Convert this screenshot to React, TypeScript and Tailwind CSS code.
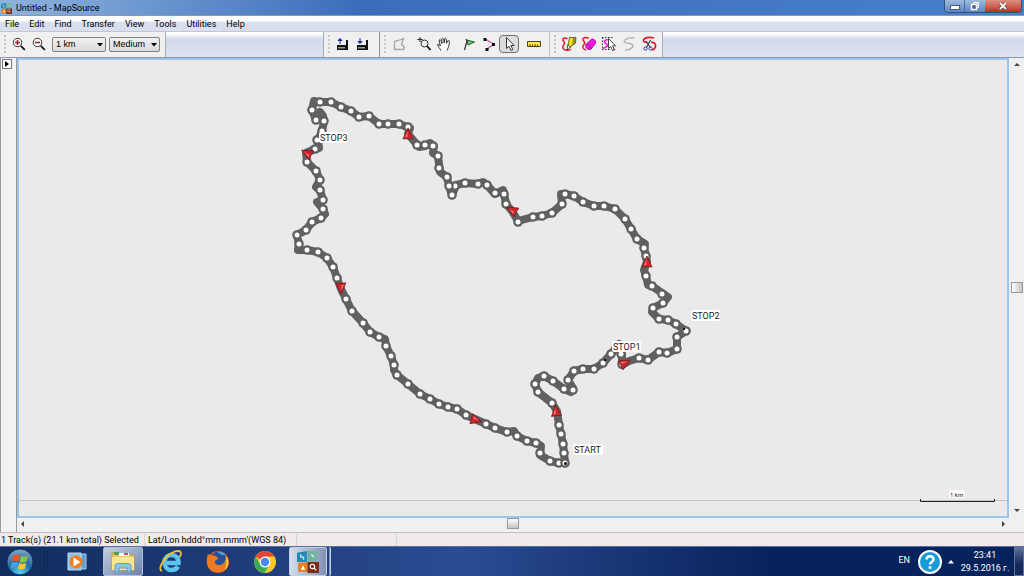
import type { ReactNode } from 'react';

type Point = [number, number];

interface Arrow {
  x: number;
  y: number;
  angle: number;
}

interface Waypoint {
  name: string;
  x: number;
  y: number;
  width: number;
}

const menus = ['File', 'Edit', 'Find', 'Transfer', 'View', 'Tools', 'Utilities', 'Help'];

// Outline of the recorded track, START -> STOP1 -> STOP2 -> STOP3 -> START
const trackPath: Point[] = [
  [564, 463], [563, 453], [562, 444], [560, 434], [558, 425], [556, 411], [551, 403], [537, 392],
  [534, 384], [537, 378], [543, 376], [552, 381], [563, 389], [570, 392], [572, 388], [567, 380],
  [573, 371], [582, 369], [593, 369], [602, 363], [610, 354], [618, 344], [621, 354], [621, 365],
  [628, 361], [638, 358], [647, 360], [658, 352], [666, 353], [676, 349], [676, 337], [685, 331],
  [675, 324], [667, 320], [658, 319], [651, 312], [652, 308], [662, 303], [667, 297], [661, 293],
  [651, 286], [647, 285], [645, 276], [643, 270], [646, 262], [645, 256], [643, 248], [644, 244],
  [636, 239], [630, 229], [624, 219], [614, 209], [603, 206], [593, 206], [582, 202], [573, 196],
  [564, 194], [560, 194], [561, 204], [551, 213], [541, 216], [532, 217], [517, 221], [511, 211],
  [505, 204], [503, 193], [502, 190], [494, 194], [486, 185], [482, 182], [477, 184], [464, 183],
  [455, 185], [451, 195], [448, 186], [446, 177], [439, 172], [437, 156], [432, 153], [433, 146],
  [429, 143], [424, 146], [418, 147], [407, 134], [409, 128], [398, 124], [387, 124], [378, 124],
  [368, 116], [358, 117], [350, 111], [340, 107], [330, 102], [319, 102], [313, 101], [311, 110],
  [315, 120], [319, 112], [322, 116], [323, 121], [321, 131], [317, 140], [318, 148], [314, 149],
  [305, 153], [306, 162], [315, 171], [319, 180], [315, 187], [319, 190], [322, 200], [316, 202],
  [322, 209], [324, 214], [320, 218], [311, 222], [305, 230], [296, 235], [298, 244], [297, 250],
  [306, 250], [317, 252], [326, 258], [332, 267], [336, 278], [340, 289], [345, 299], [351, 311],
  [362, 323], [369, 332], [378, 337], [384, 339], [385, 346], [390, 356], [393, 365], [393, 370],
  [396, 375], [407, 384], [419, 394], [429, 399], [438, 404], [447, 407], [456, 409], [465, 415],
  [476, 420], [485, 424], [494, 428], [506, 432], [513, 431], [516, 436], [526, 441], [535, 443],
  [540, 446], [539, 455], [549, 461], [558, 463], [564, 463],
];

const trackPoints: Point[] = [
  [563, 453], [562, 444], [560, 434], [558, 425], [551, 403], [537, 392], [534, 384], [543, 376],
  [552, 381], [563, 389], [572, 390], [567, 380], [573, 371], [582, 369], [593, 369], [602, 363],
  [610, 354], [620, 354], [621, 364], [638, 358], [647, 360], [658, 352], [666, 353], [676, 349],
  [676, 337], [685, 331], [675, 324], [667, 320], [658, 319], [652, 308], [662, 303], [661, 294],
  [651, 286], [645, 276], [645, 256], [643, 248], [636, 239], [630, 229], [624, 219], [614, 209],
  [603, 206], [593, 206], [582, 202], [573, 196], [564, 194], [561, 204], [551, 213], [541, 216],
  [532, 217], [517, 222], [505, 204], [503, 194], [494, 193], [486, 185], [477, 184], [464, 183],
  [454, 186], [451, 195], [448, 186], [446, 177], [438, 168], [437, 156], [432, 146], [424, 145],
  [416, 145], [407, 127], [398, 124], [387, 124], [378, 124], [368, 116], [358, 117], [350, 111],
  [340, 107], [330, 102], [319, 102], [311, 110], [315, 120], [323, 121], [321, 131], [316, 140],
  [314, 149], [306, 162], [315, 171], [319, 180], [319, 190], [322, 200], [322, 209], [320, 218],
  [311, 222], [305, 230], [296, 235], [298, 244], [306, 250], [317, 252], [326, 258], [332, 267],
  [336, 278], [345, 299], [351, 311], [362, 323], [369, 332], [378, 337], [385, 346], [390, 356],
  [393, 365], [396, 375], [407, 384], [419, 394], [429, 399], [438, 404], [447, 407], [456, 409],
  [465, 415], [485, 424], [494, 428], [506, 432], [516, 436], [526, 441], [535, 443], [539, 453],
  [549, 461], [558, 463], [564, 463],
];

const arrows: Arrow[] = [
  { x: 555, y: 411, angle: -6 },
  { x: 624, y: 363, angle: 62 },
  { x: 646, y: 262, angle: 0 },
  { x: 511, y: 210, angle: -60 },
  { x: 407, y: 134, angle: 0 },
  { x: 306, y: 153, angle: -62 },
  { x: 340, y: 288, angle: 178 },
  { x: 475, y: 420, angle: 104 },
];

const waypoints: Waypoint[] = [
  { name: 'STOP3', x: 319, y: 141, width: 29 },
  { name: 'STOP2', x: 691, y: 319, width: 29 },
  { name: 'STOP1', x: 612, y: 350, width: 29 },
  { name: 'START', x: 573, y: 453, width: 30 },
];

function TrackMap() {
  return (
    <svg viewBox="18 61 988 454" className="h-full w-full" role="img" aria-label="Track map">
      <path d="M18 500.500H1007" stroke="#c4c4c4" />
      <polyline
        points={trackPath.map((p) => p.join(',')).join(' ')}
        fill="none"
        stroke="#606060"
        strokeWidth="8"
        strokeLinejoin="round"
        strokeLinecap="round"
      />
      {trackPoints.map(([x, y], i) => (
        <g key={i}>
          <circle cx={x} cy={y} r="4.800" fill="#606060" />
          <circle cx={x} cy={y} r="2.500" fill="#fff" />
        </g>
      ))}
      <circle cx="564.500" cy="463.500" r="1.500" fill="#000" />
      <path d="M603 359h2v2h-2zM682 328h2v2h-2zM310 150h2v2h-2z" fill="#111" />
      {arrows.map((a) => (
        <g key={a.x} transform={`translate(${a.x} ${a.y}) rotate(${a.angle})`}>
          <path d="M0-6 5 5 0 4.500-5 5z" fill="#d2232a" stroke="#7a1a1d" strokeWidth=".8" strokeLinejoin="round" />
          <path d="M-.5-3-3 3.500-.5 2.700z" fill="#f4777a" />
        </g>
      ))}
      {waypoints.map((w) => (
        <g key={w.name}>
          <rect x={w.x - 1} y={w.y - 9} width={w.width} height="11" rx="2" fill="#fff" />
          <text x={w.x} y={w.y} fontSize="9" fill="#222">{w.name}</text>
        </g>
      ))}
      <rect x="948" y="490" width="16" height="8" rx="2" fill="#fff" />
      <text x="949" y="497" fontSize="6" fill="#111">1 km</text>
      <path d="M919.500 499v2.500h74V499" fill="none" stroke="#222" />
    </svg>
  );
}

function Icon({ children }: { children: ReactNode }) {
  return (
    <svg viewBox="0 0 16 16" className="h-4 w-4 shrink-0" aria-hidden="true">
      {children}
    </svg>
  );
}

function ToolButton({ label, pressed = false, children }: { label: string; pressed?: boolean; children: ReactNode }) {
  return (
    <button
      type="button"
      aria-label={label}
      aria-pressed={pressed}
      className={
        pressed
          ? 'flex h-[18px] w-5 items-center justify-center rounded-sm border border-[#6f6f6f] bg-[#dcdcdc]'
          : 'flex h-[18px] w-5 items-center justify-center rounded-sm'
      }
    >
      {children}
    </button>
  );
}

function Grip() {
  return <span className="mr-[3px] ml-1 h-[18px] w-0.5 border-l-2 border-dotted border-[#c8c8c8]" />;
}

function Filler({ className }: { className: string }) {
  return <div className={`${className} border-l border-[#a9adb8] bg-linear-to-b from-white from-5% via-[#d2daec] via-30% to-[#dde3f3]`} />;
}

function Dropdown({ label, options, className }: { label: string; options: string[]; className: string }) {
  return (
    <div className={`relative flex ${className}`}>
      <select
        aria-label={label}
        className="h-[15px] w-full appearance-none rounded-xs border border-[#808080] bg-linear-to-b from-[#f3f3f3] to-[#d9d9d9] pl-[3px] font-['Liberation_Sans',sans-serif] text-[9px] leading-[12px]"
      >
        {options.map((o) => (
          <option key={o}>{o}</option>
        ))}
      </select>
      <svg viewBox="0 0 6 4" className="pointer-events-none absolute top-1.5 right-[3px] h-1 w-1.5" aria-hidden="true">
        <path d="M0 0h6L3 3.500z" fill="#000" />
      </svg>
    </div>
  );
}

function ZoomGlyph({ plus }: { plus: boolean }) {
  return (
    <Icon>
      <circle cx="6.500" cy="6.500" r="4.200" fill="#fff" stroke="#333" />
      <path d="m9.800 9.800 4 4" stroke="#111" strokeWidth="1.800" />
      <path d={plus ? 'M4 6.500h5M6.500 4v5' : 'M4 6.500h5'} stroke="#9c1f2e" strokeWidth="1.600" />
    </Icon>
  );
}

function DeviceGlyph({ up }: { up: boolean }) {
  return (
    <Icon>
      <path d="M2 9h9V4h2v10H2z" fill="#111" />
      <path d="M3 11h7v1.500H3z" fill="#9a9a9a" />
      <path d={up ? 'M5 8V4.500M3 4.500 5 2.500l2 2z' : 'M5 2v3.500M3 5.500l2 2 2-2z'} fill="#1d2a9c" stroke="#1d2a9c" />
    </Icon>
  );
}

function Toolbar() {
  return (
    <div className="flex h-[26px] shrink-0 border-b border-[#8d99a6] bg-[#f0f0f0]">
      <div className="flex w-[165px] items-center pb-px">
        <Grip />
        <ToolButton label="Zoom in"><ZoomGlyph plus /></ToolButton>
        <ToolButton label="Zoom out"><ZoomGlyph plus={false} /></ToolButton>
        <Dropdown label="Map scale" options={['1 km', '2 km', '5 km']} className="ml-[3px] w-[54px]" />
        <Dropdown label="Detail level" options={['Medium', 'High', 'Low']} className="ml-[3px] w-[51px]" />
      </div>
      <Filler className="w-[158px]" />
      <div className="flex w-14 items-center border-l border-[#a9adb8] pb-px">
        <Grip />
        <ToolButton label="Send to device"><DeviceGlyph up /></ToolButton>
        <ToolButton label="Receive from device"><DeviceGlyph up={false} /></ToolButton>
      </div>
      <div className="flex w-[170px] items-center border-l border-[#8f8f8f] pb-px">
        <Grip />
        <ToolButton label="Map tool">
          <Icon>
            <path d="M3.500 13.500v-8l4-1 5-2-2 6 3 3-1 2z" fill="#eee" stroke="#a5a5a5" strokeWidth="1.300" />
          </Icon>
        </ToolButton>
        <span className="w-[5px]" />
        <ToolButton label="Zoom tool">
          <Icon>
            <path d="M4 1v5M1.500 3.500h5" stroke="#222" />
            <circle cx="8.500" cy="7.500" r="3.500" fill="#eee" stroke="#333" />
            <path d="m11 10 3.500 4" stroke="#111" strokeWidth="1.800" />
          </Icon>
        </ToolButton>
        <ToolButton label="Hand tool">
          <Icon>
            <path d="M5 14.500c-1-2-3-4-3.500-6 1-.8 2 .3 2.800 1.500L3.200 4c1-1 1.800 0 2.800 3.500L5.800 2.800c1-1.200 2-.5 2.400 4.200l.6-4.500c1.200-.8 2 .4 1.600 4.900L12 4.500c1.500-.5 1.700.6 1 4-.2 3-1.500 4-2 6" fill="#fff" stroke="#222" strokeWidth=".9" />
          </Icon>
        </ToolButton>
        <span className="w-[5px]" />
        <ToolButton label="Waypoint tool">
          <Icon>
            <path d="M6 4 13.500 6 7 9z" fill="#7cc884" stroke="#1f5f28" />
            <path d="m5 3 1 2-2.500 9" stroke="#333" strokeWidth="1.200" fill="none" />
          </Icon>
        </ToolButton>
        <ToolButton label="Route tool">
          <Icon>
            <path d="m4 3 9 5-7 5" fill="none" stroke="#c356a8" strokeWidth="1.300" />
            <path d="M2.500 2h3v3h-3zM11 7h3v3h-3zM4.500 12h3v3h-3z" fill="#111" />
          </Icon>
        </ToolButton>
        <ToolButton label="Selection tool" pressed>
          <Icon>
            <path d="M5.500 1.500v11L8 10.200l2 4.300 1.800-.9L9.900 9.500h3.200z" fill="#fff" stroke="#222" strokeWidth=".9" />
          </Icon>
        </ToolButton>
        <span className="w-[5px]" />
        <ToolButton label="Distance tool">
          <Icon>
            <path d="M1.500 5.500h13v5h-13z" fill="#ffe94a" stroke="#4d4310" />
            <path d="M4 10.500V8M6.500 10.500V8.500M9 10.500V8M11.500 10.500V8.500" stroke="#4d4310" />
          </Icon>
        </ToolButton>
      </div>
      <div className="flex w-[113px] items-center border-l border-[#c4c4c4] pb-px">
        <Grip />
        <ToolButton label="Draw track">
          <Icon>
            <path d="M6.500 3C4 1 1.500 2 2 4s3 2.500 1 4.500-1.500 5 1.500 5.500 4.500 1 5.500-1" fill="none" stroke="#e3192b" strokeWidth="1.500" />
            <path d="M8.500 1.500H15L14.500 7 9 11.500 7 9z" fill="#f7e11c" stroke="#3b3510" strokeWidth=".7" />
            <path d="M12 1.500h3L14.500 7 11 9.500z" fill="#55502a" opacity=".55" />
            <path d="M6.800 8.800 9.500 11l-3.500 3z" fill="#fff" stroke="#222" strokeWidth=".8" />
          </Icon>
        </ToolButton>
        <ToolButton label="Erase track">
          <Icon>
            <path d="M8 2.500C5 .5 1 2 2 4s3 2.500 1 4.500-1.500 4.500 2 5.500" fill="none" stroke="#e3192b" strokeWidth="1.500" />
            <path d="m5 8.500 5-5c2-1.500 5.500 1 4.500 4l-4.500 5.500C7.500 15 3.500 11.500 5 8.500z" fill="#f01be0" stroke="#8d1285" strokeWidth=".9" />
            <path d="M5 8.500c2-1 5 1.500 5 4.500" fill="none" stroke="#8d1285" strokeWidth=".7" />
          </Icon>
        </ToolButton>
        <ToolButton label="Select track">
          <Icon>
            <path d="M1 1.500h12M1.500 1.500v12M1 13.500h8" stroke="#333" strokeDasharray="1.500 1.500" />
            <path d="M8 4C6 3.500 3 4 3.500 6s3.500 1.500 3 3.500-3.500 1-4.500 4" fill="none" stroke="#f01be0" strokeWidth="1.600" />
            <path d="m12 13 2 1" stroke="#e3192b" strokeWidth="1.500" />
            <path d="M7.500 2.500v10l2.300-2 1.700 4 1.800-.8-1.700-3.900h3z" fill="#fff" stroke="#333" strokeWidth=".9" />
          </Icon>
        </ToolButton>
        <ToolButton label="Join tracks">
          <Icon>
            <path d="M13.500 2c-4-.5-9 .5-10 2.500s2 2.500 5 3 4.500 1.500 3 3.500-4 3-7.500 3" fill="none" stroke="#b3b3b3" strokeWidth="1.500" />
          </Icon>
        </ToolButton>
        <ToolButton label="Split track">
          <Icon>
            <path d="M13 2C8 .5 3 2 2.500 4s2 2.500 4 2M10 6.500c3-.5 5 1 4.500 4s-2 3-3.500 3.500" fill="none" stroke="#e3192b" strokeWidth="1.700" />
            <path d="m9.500 4-4 7.500M5 5.500l4.500 6" stroke="#333" strokeWidth="1.100" />
            <circle cx="4.500" cy="12.500" r="1.600" fill="none" stroke="#2739b5" />
            <circle cx="9.500" cy="12.500" r="1.600" fill="none" stroke="#2739b5" />
          </Icon>
        </ToolButton>
      </div>
      <Filler className="flex-1" />
    </div>
  );
}

function MapSourceLogo({ className }: { className: string }) {
  return (
    <svg viewBox="0 0 20 20" className={className} aria-hidden="true">
      <path d="M0 1.500 9 0v10H0z" fill="#2489b4" />
      <path d="M9.500 0H18v9.500H9.500z" fill="#6fb5a0" />
      <path d="M1 10.500h8.500V19H1z" fill="#e78021" />
      <path d="M9.500 10H20v10H9.500z" fill="#7b2c18" />
      <path d="m5.500 13 2 4h-4z" fill="#fff" />
      <path d="M3.500 3v2.500H6V8" fill="none" stroke="#cfe6f2" strokeWidth="1.200" />
      <circle cx="14" cy="14" r="2" fill="none" stroke="#fff" />
      <path d="m15.500 15.500 2 2M13 3l2.500 2.500" stroke="#fff" />
    </svg>
  );
}

function TitleBar() {
  return (
    <header className="flex h-4 shrink-0 items-start justify-between border-b border-[#8799b5] bg-linear-to-r from-[#8fb3de] via-[#3b6dba] via-35% to-[#4a80cb]">
      <div className="flex items-center gap-1 pt-0.5 pl-px">
        <MapSourceLogo className="h-[11px] w-[11px]" />
        <h1 className="text-[9px] leading-[13px] text-black">Untitled - MapSource</h1>
      </div>
      <div className="mr-0.5 flex h-[13px] overflow-hidden rounded-b border border-t-0 border-[#33517d]">
        <button type="button" aria-label="Minimize" className="flex w-5 items-center justify-center border-r border-[#4d6b96] bg-linear-to-b from-[#9fbbe0] to-[#5d86bf]">
          <span className="mt-0.5 h-[3px] w-2 bg-white outline outline-[#4a5d7d]" />
        </button>
        <button type="button" aria-label="Restore" className="flex w-5 items-center justify-center bg-linear-to-b from-[#9fbbe0] to-[#5d86bf]">
          <svg viewBox="0 0 10 10" className="h-2.5 w-2.5" aria-hidden="true">
            <path d="M3.500 1.500h5v5h-5z" fill="#9fb8da" stroke="#fff" />
            <path d="M1.500 3.500h5v5h-5z" fill="#4a5d7d" stroke="#fff" strokeWidth="1.500" />
          </svg>
        </button>
        <button type="button" aria-label="Close" className="flex w-9 items-center justify-center bg-linear-to-b from-[#dc8f83] to-[#bf2c1a]">
          <svg viewBox="0 0 10 8" className="h-2 w-2.5" aria-hidden="true">
            <path d="m2 1 6 6M8 1 2 7" stroke="#5e2a26" strokeWidth="3" />
            <path d="m2 1 6 6M8 1 2 7" stroke="#fff" strokeWidth="1.900" />
          </svg>
        </button>
      </div>
    </header>
  );
}

function ScrollArrow({ label, d }: { label: string; d: string }) {
  return (
    <button type="button" aria-label={label} className="flex h-3 w-3 items-center justify-center">
      <svg viewBox="0 0 6 6" className="h-1.5 w-1.5" aria-hidden="true">
        <path d={d} fill="#444" />
      </svg>
    </button>
  );
}

function Taskbar() {
  return (
    <footer className="flex h-[30px] shrink-0 items-stretch border-t border-[#56719f] bg-linear-to-r from-[#122c5e] via-[#2a4c92] via-45% to-[#08235c] to-75% text-white">
      <button type="button" aria-label="Start" className="flex w-10 items-center justify-center">
        <svg viewBox="0 0 28 28" className="h-7 w-7" aria-hidden="true">
          <defs>
            <radialGradient id="orb" cx="50%" cy="90%" r="90%">
              <stop offset="0" stopColor="#58d3f2" />
              <stop offset=".5" stopColor="#226ba6" />
              <stop offset="1" stopColor="#88a9c4" />
            </radialGradient>
          </defs>
          <circle cx="14" cy="14" r="13" fill="url(#orb)" stroke="#10325c" />
          <path d="M7 8c2.500-1.800 4.500-1.800 6.800-.4l-1.300 6c-2.300-1.200-4.500-1-6.800.3z" fill="#e9562b" />
          <path d="M14.800 8c2.300 1.200 4.500 1 7-.2l-1.400 6c-2.400 1.200-4.700 1.200-6.900 0z" fill="#8bc540" />
          <path d="M5.500 15c2.300-1.300 4.500-1.500 6.800-.3l-1.300 5.500c-2.300-1.100-4.500-1-6.800.3z" fill="#42a3e0" />
          <path d="M13.300 15c2.200 1.200 4.500 1.200 6.900 0l-1.400 5.500c-2.400 1.300-4.700 1.200-6.900 0z" fill="#fdc62e" />
        </svg>
      </button>
      <span className="mx-1 my-1 w-1 border-x border-dotted border-[#0a1d44]" />
      <button type="button" aria-label="Media Player" className="ml-1 flex w-[42px] items-center justify-center">
        <svg viewBox="0 0 22 22" className="h-[22px] w-[22px]" aria-hidden="true">
          <path d="M7 3h13v15H7z" fill="#5f9fd0" stroke="#a4cdea" />
          <path d="M2 2h13v17H2z" fill="#8ec1e4" stroke="#b9dcf2" />
          <circle cx="10" cy="11" r="6.500" fill="#f07d20" />
          <path d="m7.500 6.500 7 4.500-7 4.500z" fill="#fff" />
        </svg>
      </button>
      <button type="button" aria-label="Explorer" className="ml-[5px] flex w-10 items-center justify-center rounded-xs border border-[#aebfd8] bg-linear-to-br from-[#c3cfe1] to-[#6d83ab]">
        <svg viewBox="0 0 26 24" className="h-6 w-[26px]" aria-hidden="true">
          <path d="M2 3h8l1 2h13v15H2z" fill="#e8c964" stroke="#c7a145" />
          <path d="M4 2h5v3H4z" fill="#4aa35a" />
          <path d="M9 3h10v3H9z" fill="#fff" />
          <path d="M14 3h4v2h-4z" fill="#d25045" />
          <path d="M2 7h22v13H2z" fill="#f7e58f" />
          <path d="M5 22v-6c0-1.500 1-2.500 2.500-2.500h11c1.500 0 2.500 1 2.500 2.500v6h-4v-4H9v4z" fill="#8cc6e6" stroke="#5c9dc8" />
        </svg>
      </button>
      <button type="button" aria-label="Internet Explorer" className="ml-1 flex w-12 items-center justify-center">
        <svg viewBox="0 0 26 26" className="h-[26px] w-[26px]" aria-hidden="true">
          <path d="M20 17.500c-1.500 2.500-3.500 3.500-6.500 3.500-4 0-7-3-7-7.500s3-7.500 7-7.500 7.500 3 7 8H8" fill="none" stroke="#5cc3ef" strokeWidth="4.500" />
          <path d="M4 22c-4-1-.5-9 5-14.500S21 1 22.500 3c1 1.500 0 4-1 5" fill="none" stroke="#f2c033" strokeWidth="1.800" />
        </svg>
      </button>
      <button type="button" aria-label="Firefox" className="flex w-[46px] items-center justify-center">
        <svg viewBox="0 0 24 24" className="h-6 w-6" aria-hidden="true">
          <circle cx="12" cy="12" r="11" fill="#e0561a" />
          <circle cx="12.500" cy="9.500" r="8" fill="#284f9c" />
          <path d="M11 2c3-1.500 7 0 8.500 3L16 5z" fill="#5b9ed8" />
          <path d="M2 4c1 1.500 2.500 1.500 4 1.500 3-.5 5 1 6.500 3L9 11c-1 3.500 4 5 6.500 3.500 3-1 5-5.500 4-9 4 4.500 4 10.500-.5 14.500S5 23 2 17C0 13 .5 8 2 4z" fill="#ee7a1f" />
          <path d="M19.500 5.500c4 4.500 4 10.500-.5 14.500 1.500-4 2-9.500.5-14.500z" fill="#fbd23e" />
        </svg>
      </button>
      <button type="button" aria-label="Chrome" className="flex w-12 items-center justify-center">
        <svg viewBox="0 0 24 24" className="h-6 w-6" aria-hidden="true">
          <circle cx="12" cy="12" r="11" fill="#fbc927" />
          <path d="M12 12 2.500 6.500A11 11 0 0 1 21.500 6.500H12z" fill="#e4443a" />
          <path d="M2.500 6.500A11 11 0 0 0 11.500 23l5-8.500H7.500z" fill="#3ba757" />
          <circle cx="12" cy="12" r="5.500" fill="#fff" />
          <circle cx="12" cy="12" r="4.200" fill="#4687ee" />
        </svg>
      </button>
      <button type="button" aria-label="MapSource" className="flex w-[38px] items-center justify-center rounded-xs border border-[#c3cee0] bg-linear-to-r from-[#d3dce9] to-[#8293b4]">
        <MapSourceLogo className="h-[22px] w-[22px]" />
      </button>
      <span className="ml-0.5 w-0.5 rounded-r-xs border-r border-[#c3cee0] bg-[#8293b4]" />
      <div className="ml-auto flex items-center">
        <span className="mr-2 pb-1 text-[9px] leading-3">EN</span>
        <svg viewBox="0 0 24 24" className="h-6 w-6" role="img" aria-label="Help">
          <circle cx="12" cy="12" r="11" fill="#1a9bd9" stroke="#fff" strokeWidth="2" />
          <path d="M8.500 9.500c0-4.500 7-4.500 7 0 0 2.500-3.500 2.500-3.500 5" fill="none" stroke="#fff" strokeWidth="2.500" />
          <path d="M10.700 16.200h2.600v2.600h-2.600z" fill="#fff" />
        </svg>
        <svg viewBox="0 0 6 4" className="mx-1.5 h-1 w-1.5" aria-hidden="true">
          <path d="M3 0 6 3.500H0z" fill="#fff" />
        </svg>
        <div className="mr-1 w-[50px] text-center text-[9px] leading-[13px] whitespace-nowrap">
          <p>23:41</p>
          <p>29.5.2016 г.</p>
        </div>
        <button type="button" aria-label="Show desktop" className="h-full w-2.5 border border-[#5f7297] bg-linear-to-b from-[#5d7096] to-[#14295a] to-60%" />
      </div>
    </footer>
  );
}

export default function App() {
  return (
    <div className="flex h-screen flex-col overflow-hidden bg-[#f0f0f0] font-[Roboto,'Liberation_Sans',sans-serif] text-black">
      <TitleBar />

      <nav className="flex h-4 shrink-0 items-center border-b border-[#c3c6d0] bg-linear-to-b from-white from-30% to-[#d9dff0] to-45% pt-px">
        {menus.map((m) => (
          <button key={m} type="button" className="px-[5px] text-[9px] leading-3">
            {m}
          </button>
        ))}
      </nav>

      <Toolbar />

      <main className="flex min-h-0 flex-1">
        <aside className="w-[17px] border-r border-l border-[#9a9a9a] bg-[#f2f2f2] pt-px">
          <button type="button" aria-label="Show panel" className="ml-px flex h-2.5 w-2.5 items-center justify-center border border-[#777] bg-white">
            <svg viewBox="0 0 4 6" className="h-1.5 w-1" aria-hidden="true">
              <path d="m0 0 4 3-4 3z" fill="#000" />
            </svg>
          </button>
        </aside>
        <div className="flex min-w-0 flex-1 flex-col">
          <div className="min-h-0 flex-1 border-2 border-[#9dc4ee] bg-[#eaeaea]">
            <TrackMap />
          </div>
          <div className="flex h-[14px] items-center justify-between pb-[3px]">
            <ScrollArrow label="Scroll left" d="M4 0v6L1 3z" />
            <span className="h-[11px] w-3 border border-[#999] bg-linear-to-b from-white to-[#c4c4c4]" />
            <ScrollArrow label="Scroll right" d="m2 0 3 3-3 3z" />
          </div>
        </div>
        <div className="flex w-[15px] flex-col items-center justify-between pt-px pb-4">
          <ScrollArrow label="Scroll up" d="M0 4h6L3 1z" />
          <span className="h-[11px] w-3 border border-[#999] bg-linear-to-r from-white to-[#c4c4c4]" />
          <ScrollArrow label="Scroll down" d="M0 2h6L3 5z" />
        </div>
      </main>

      <div className="flex h-[14px] shrink-0 items-center border-t border-[#bdbdbd] bg-[#f0ebea] text-[9px] leading-3">
        <span className="w-[145px] border-r border-[#d8d4d3] pl-px">1 Track(s) (21.1 km total) Selected</span>
        <span className="w-[152px] border-r border-[#d8d4d3] pl-[3px]">Lat/Lon hddd°mm.mmm'(WGS 84)</span>
        <span className="h-3 w-[100px] border-r border-[#d8d4d3]" />
      </div>

      <Taskbar />
    </div>
  );
}
